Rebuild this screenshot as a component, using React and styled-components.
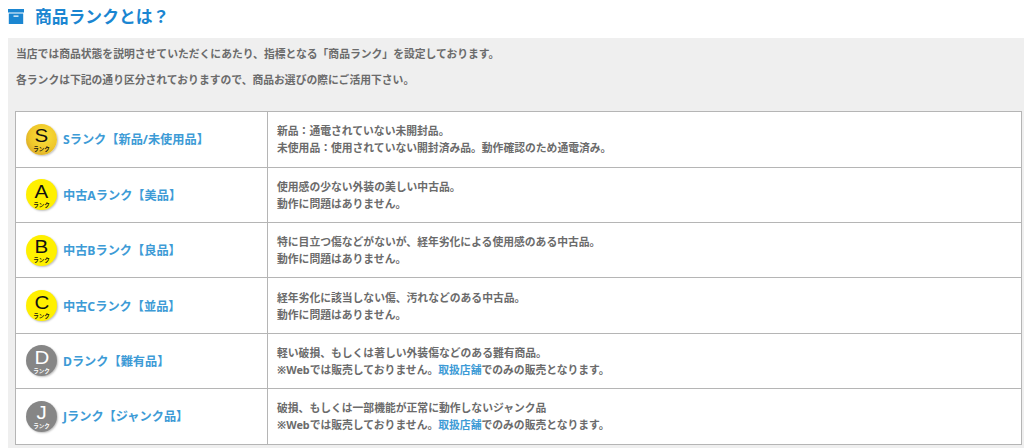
import React from 'react';
import styled, { createGlobalStyle } from 'styled-components';

const GlobalStyle = createGlobalStyle`
  html, body {
    margin: 0;
    padding: 0;
    background: #fff;
    overflow: hidden;
  }
  body {
    font-family: "Noto Sans", "Noto Sans CJK JP", sans-serif;
    color: #666;
  }
`;

const Page = styled.div`
  width: 1024px;
  height: 448px;
  padding-left: 8px;
  box-sizing: border-box;
  overflow: hidden;
`;

const Heading = styled.h2`
  display: flex;
  align-items: center;
  gap: 11px;
  height: 38px;
  margin: 0;
  padding-bottom: 6px;
  box-sizing: border-box;
  font-size: 16.8px;
  font-weight: 700;
  color: #1b86d1;
`;

const Panel = styled.section`
  background: #efefef;
  padding: 8px 2px 5px 7px;
  height: 410px;
  box-sizing: border-box;
`;

const Lead = styled.p`
  margin: 0 0 10px 1px;
  font-size: 10.8px;
  line-height: 16px;
  font-weight: 700;
  color: #6b6b6b;
`;

const Table = styled.div`
  display: grid;
  grid-template-columns: 252px 1fr;
  margin-top: 23px;
  background: #fff;
  border: 1px solid #b5b5b5;
`;

const Cell = styled.div`
  display: flex;
  height: ${p => (p.$first ? '54.6px' : '55.4px')};
  box-sizing: border-box;
  align-items: center;
  border-top: ${p => (p.$first ? 'none' : '1px solid #b5b5b5')};
`;

const NameCell = styled(Cell)`
  gap: 6px;
  padding-left: 10px;
  border-right: 1px solid #b5b5b5;
`;

const DescCell = styled(Cell)`
  flex-direction: column;
  align-items: flex-start;
  justify-content: center;
  padding-left: 9px;
  font-size: 10.8px;
  line-height: 17px;
  font-weight: 700;
  color: #6b6b6b;
`;

const Badge = styled.div`
  flex: none;
  width: 31px;
  height: 31px;
  border-radius: 50%;
  display: flex;
  flex-direction: column;
  align-items: center;
  font-family: "Liberation Sans", sans-serif;
  color: ${p => (p.$tone === 'gray' ? '#fff' : '#111')};
  background: ${p =>
    p.$tone === 'gold'
      ? 'radial-gradient(circle at 58% 40%, #f9e23c 0%, #efc62a 55%, #c4922c 100%)'
      : p.$tone === 'gray'
        ? '#868686'
        : '#fff000'};
  box-shadow: 1px 1px 2px rgba(0, 0, 0, 0.25);
`;

const BadgeLetter = styled.span`
  font-size: 19px;
  line-height: 20px;
  margin-top: 2.5px;
  transform: scaleX(1.08);
`;

const BadgeLabel = styled.span`
  font-family: "Noto Sans CJK JP", sans-serif;
  font-size: 5.5px;
  line-height: 6px;
  font-weight: 700;
`;

const RankName = styled.a`
  font-size: 12.2px;
  font-weight: 700;
  color: #3d9bd6;
`;

const TextLink = styled.a`
  color: #3d9bd6;
`;

const ranks = [
  {
    letter: 'S',
    tone: 'gold',
    name: 'Sランク【新品/未使用品】',
    lines: ['新品：通電されていない未開封品。', '未使用品：使用されていない開封済み品。動作確認のため通電済み。'],
  },
  {
    letter: 'A',
    tone: 'yellow',
    name: '中古Aランク【美品】',
    lines: ['使用感の少ない外装の美しい中古品。', '動作に問題はありません。'],
  },
  {
    letter: 'B',
    tone: 'yellow',
    name: '中古Bランク【良品】',
    lines: ['特に目立つ傷などがないが、経年劣化による使用感のある中古品。', '動作に問題はありません。'],
  },
  {
    letter: 'C',
    tone: 'yellow',
    name: '中古Cランク【並品】',
    lines: ['経年劣化に該当しない傷、汚れなどのある中古品。', '動作に問題はありません。'],
  },
  {
    letter: 'D',
    tone: 'gray',
    name: 'Dランク【難有品】',
    lines: ['軽い破損、もしくは著しい外装傷などのある難有商品。'],
    webOnly: true,
  },
  {
    letter: 'J',
    tone: 'gray',
    name: 'Jランク【ジャンク品】',
    lines: ['破損、もしくは一部機能が正常に動作しないジャンク品'],
    webOnly: true,
  },
];

const BoxIcon = () => (
  <svg width="16" height="15" viewBox="0 0 16 15" fill="#1b86d1">
    <rect x="0" y="0" width="16" height="3.5" />
    <path d="M0.8 4.5h14.4V15H0.8z M5.5 6.5v1.3h5V6.5z" fillRule="evenodd" />
  </svg>
);

const App = () => (
  <Page>
    <GlobalStyle />
    <Heading>
      <BoxIcon />
      商品ランクとは？
    </Heading>
    <Panel>
      <Lead>当店では商品状態を説明させていただくにあたり、指標となる「商品ランク」を設定しております。</Lead>
      <Lead>各ランクは下記の通り区分されておりますので、商品お選びの際にご活用下さい。</Lead>
      <Table>
        {ranks.map((rank, i) => (
          <React.Fragment key={rank.letter}>
            <NameCell $first={i === 0}>
              <Badge $tone={rank.tone}>
                <BadgeLetter>{rank.letter}</BadgeLetter>
                <BadgeLabel>ランク</BadgeLabel>
              </Badge>
              <RankName>{rank.name}</RankName>
            </NameCell>
            <DescCell $first={i === 0}>
              {rank.lines.map(line => (
                <div key={line}>{line}</div>
              ))}
              {rank.webOnly && (
                <div>
                  ※Webでは販売しておりません。<TextLink>取扱店舗</TextLink>でのみの販売となります。
                </div>
              )}
            </DescCell>
          </React.Fragment>
        ))}
      </Table>
    </Panel>
  </Page>
);

export default App;
